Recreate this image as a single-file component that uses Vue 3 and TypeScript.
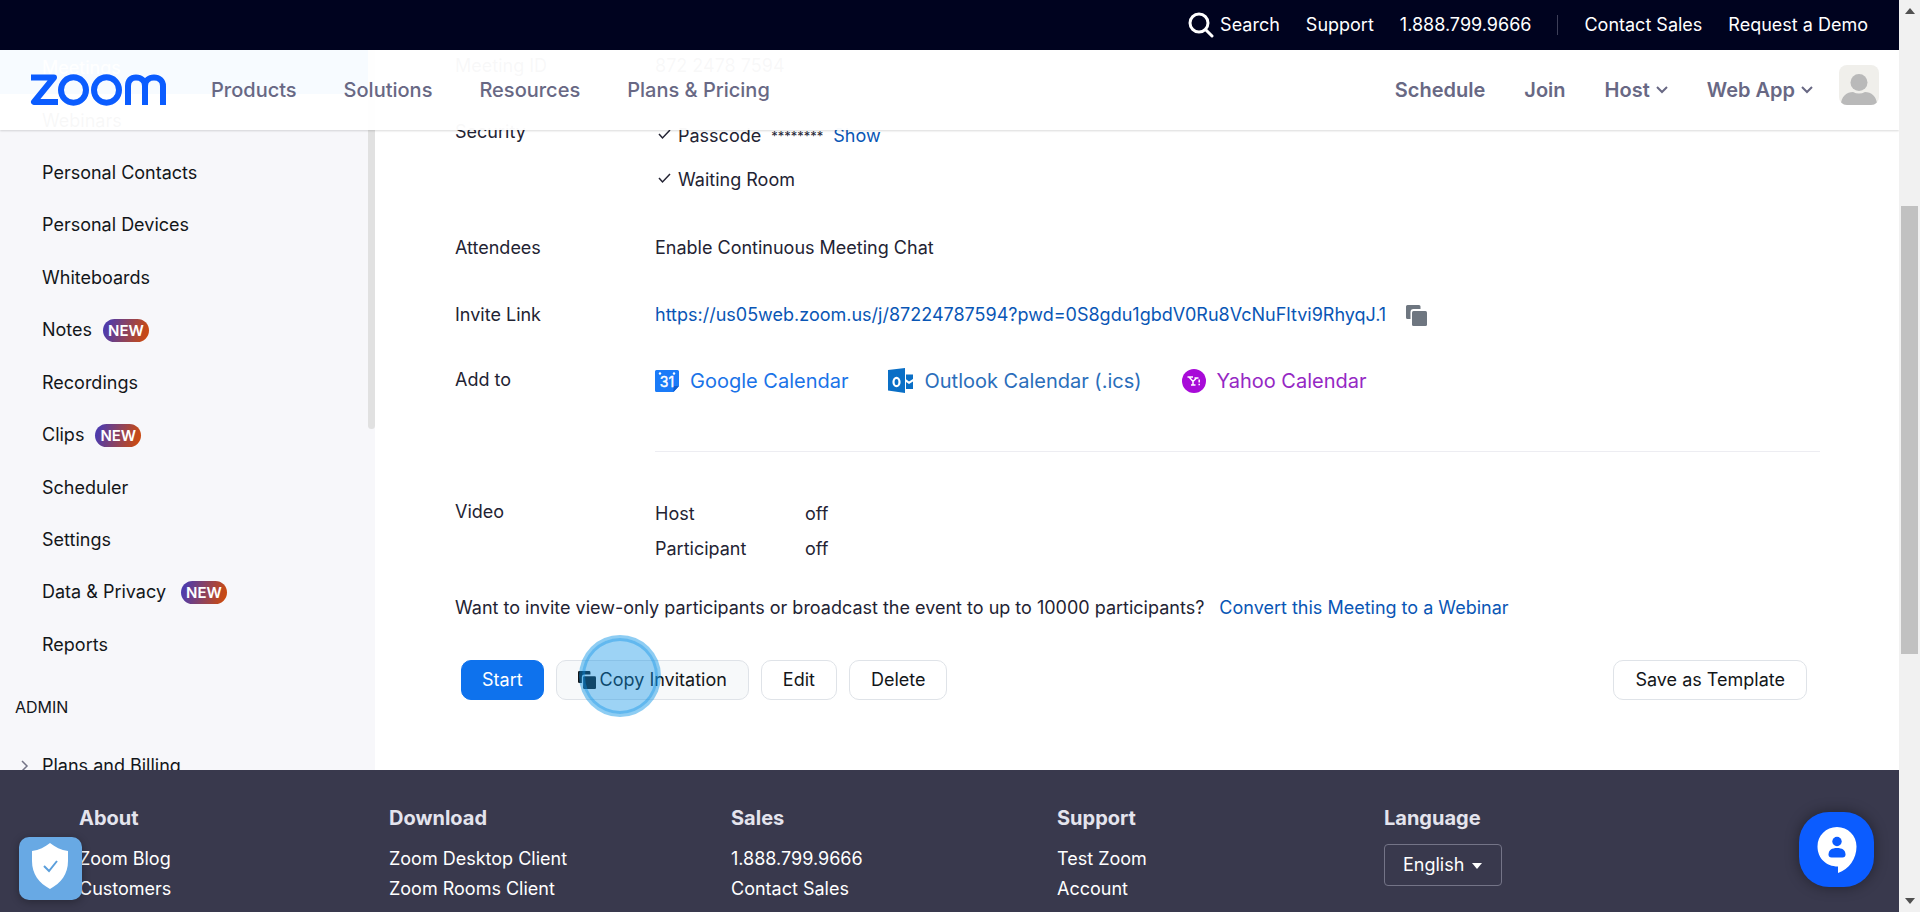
<script setup lang="ts">
import { ref } from 'vue'

interface NavItem {
  label: string
  isNew?: boolean
  wide?: boolean
  active?: boolean
}

const utilityLinks: string[] = ['Support', '1.888.799.9666']
const salesLinks: string[] = ['Contact Sales', 'Request a Demo']
const siteLinks: string[] = ['Products', 'Solutions', 'Resources', 'Plans & Pricing']

const sideItems: NavItem[] = [
  { label: 'Meetings', active: true },
  { label: 'Webinars' },
  { label: 'Personal Contacts' },
  { label: 'Personal Devices' },
  { label: 'Whiteboards' },
  { label: 'Notes', isNew: true },
  { label: 'Recordings' },
  { label: 'Clips', isNew: true },
  { label: 'Scheduler' },
  { label: 'Settings' },
  { label: 'Data & Privacy', isNew: true, wide: true },
  { label: 'Reports' },
]

const video = [
  { who: 'Host', state: 'off' },
  { who: 'Participant', state: 'off' },
]

const footerColumns = [
  { title: 'About', links: ['Zoom Blog', 'Customers'] },
  { title: 'Download', links: ['Zoom Desktop Client', 'Zoom Rooms Client'] },
  { title: 'Sales', links: ['1.888.799.9666', 'Contact Sales'] },
  { title: 'Support', links: ['Test Zoom', 'Account'] },
]

const language = ref('English')
</script>

<template>
  <div class="window">
    <div class="page">
      <div class="topbar">
        <button class="search" type="button">
          <svg width="26" height="26" viewBox="0 0 26 26" fill="none" stroke="#fff" stroke-width="3" stroke-linecap="round">
            <circle cx="11" cy="11" r="9" />
            <path d="M18 18l6 6" />
          </svg>
          Search
        </button>
        <a v-for="l in utilityLinks" :key="l" href="#">{{ l }}</a>
        <span class="divider"></span>
        <a v-for="l in salesLinks" :key="l" href="#">{{ l }}</a>
      </div>

      <div class="body">
        <header class="header">
          <a href="#" class="logo" aria-label="Zoom">
            <svg width="136" height="32" viewBox="0 0 136 32" fill="none" stroke="#0b5cff" stroke-width="6">
              <path d="M1 3.500H24L4 28H28" stroke-linejoin="round" />
              <ellipse cx="43.500" cy="16" rx="12.500" ry="12.700" />
              <ellipse cx="76.500" cy="16" rx="12.500" ry="12.700" />
              <path d="M98 31V12C98 6.500 101 3.500 106 3.500C111 3.500 115 6.500 115 12V31M115 12C115 6.500 119 3.500 124 3.500C129 3.500 133 6.500 133 12V31" />
            </svg>
          </a>
          <nav class="site-nav">
            <a v-for="l in siteLinks" :key="l" href="#">{{ l }}</a>
          </nav>
          <nav class="user-nav">
            <a href="#">Schedule</a>
            <a href="#">Join</a>
            <a href="#">Host
              <svg width="12" height="8" viewBox="0 0 12 8" fill="none" stroke="#686884" stroke-width="2"><path d="M1 1l5 5 5-5" /></svg>
            </a>
            <a href="#">Web App
              <svg width="12" height="8" viewBox="0 0 12 8" fill="none" stroke="#686884" stroke-width="2"><path d="M1 1l5 5 5-5" /></svg>
            </a>
          </nav>
          <button class="avatar" type="button" aria-label="Profile">
            <svg width="40" height="40" viewBox="0 0 40 40" fill="#b9b9b9">
              <circle cx="20" cy="17.500" r="8.500" />
              <path d="M2 40C2 31 8 27 14 27C18 29 22 29 26 27C32 27 38 31 38 40z" />
            </svg>
          </button>
        </header>

        <aside class="sidebar">
          <ul class="side-list">
            <li v-for="item in sideItems" :key="item.label" :class="{ active: item.active }">
              <a href="#">{{ item.label }}</a>
              <span v-if="item.isNew" class="pill" :class="{ wide: item.wide }">NEW</span>
            </li>
          </ul>
          <h2 class="side-heading">ADMIN</h2>
          <a href="#" class="side-group">
            <svg width="8" height="12" viewBox="0 0 8 12" fill="none" stroke="#747487" stroke-width="1.500"><path d="M1 1l5 5-5 5" /></svg>
            Plans and Billing
          </a>
          <span class="side-thumb"></span>
        </aside>

        <main class="content">
          <dl class="details">
            <div class="row id-row">
              <dt>Meeting ID</dt>
              <dd>872 2478 7594</dd>
            </div>
            <div class="row security">
              <dt>Security</dt>
              <dd>
                <div class="check">
                  <svg width="13" height="11" viewBox="0 0 13 11" fill="none" stroke="#232333" stroke-width="1.500"><path d="M1 5l3.500 4L12 1" /></svg>
                  <span>Passcode</span>
                  <span class="stars">********</span>
                  <a href="#" class="link">Show</a>
                </div>
                <div class="check">
                  <svg width="13" height="11" viewBox="0 0 13 11" fill="none" stroke="#232333" stroke-width="1.500"><path d="M1 5l3.500 4L12 1" /></svg>
                  <span>Waiting Room</span>
                </div>
              </dd>
            </div>
            <div class="row attendees">
              <dt>Attendees</dt>
              <dd>Enable Continuous Meeting Chat</dd>
            </div>
            <div class="row invite">
              <dt>Invite Link</dt>
              <dd>
                <a href="#" class="link">https://us05web.zoom.us/j/87224787594?pwd=0S8gdu1gbdV0Ru8VcNuFltvi9RhyqJ.1</a>
                <button class="copy" type="button" aria-label="Copy link">
                  <svg width="21" height="21" viewBox="0 0 21 21" fill="#6e7680">
                    <path d="M1.500 0H13a1.500 1.500 0 0 1 1.500 1.500V4H7.500A3 3 0 0 0 4.500 7V14H1.500A1.500 1.500 0 0 1 0 12.500V1.500A1.500 1.500 0 0 1 1.500 0z" />
                    <rect x="6" y="6" width="15" height="15" rx="1.500" />
                  </svg>
                </button>
              </dd>
            </div>
            <div class="row add-to">
              <dt>Add to</dt>
              <dd class="calendars">
                <a href="#" class="google">
                  <svg width="24" height="24" viewBox="0 0 24 24">
                    <path d="M1.500 1H22.500a1.500 1.500 0 0 1 1.500 1.500V17l-5.500 6H1.500A1.500 1.500 0 0 1 0 21.500V2.500A1.500 1.500 0 0 1 1.500 1z" fill="#1a7bf8" />
                    <path d="M24 17l-5.500 6v-6z" fill="#0d5cd0" />
                    <circle cx="5" cy="4.500" r="1.200" fill="#fff" /><circle cx="19" cy="4.500" r="1.200" fill="#fff" />
                    <text x="12" y="18" text-anchor="middle" font-size="14" fill="#fff" stroke="#fff" stroke-width="0.400">31</text>
                  </svg>
                  Google Calendar
                </a>
                <a href="#" class="outlook">
                  <svg width="25" height="25" viewBox="0 0 25 25" fill="#0a6fc6">
                    <path d="M0 2L17 0V25L0 22.500z" />
                    <path d="M18 6.500H25V11l-4 2.500-3-2.200zM18 14l3 2 4-2.500V21H18z" />
                    <ellipse cx="8.500" cy="14" rx="3" ry="4.200" fill="none" stroke="#fff" stroke-width="2.200" />
                  </svg>
                  Outlook Calendar (.ics)
                </a>
                <a href="#" class="yahoo">
                  <svg width="24" height="24" viewBox="0 0 24 24">
                    <circle cx="12" cy="12" r="12" fill="#a80bd8" />
                    <path d="M5.500 8H11M7 8l4 4.500L14.500 9M12.500 9h4M11 12v4M9 16h4.500" fill="none" stroke="#fff" stroke-width="1.500" />
                    <path d="M17.200 10.500v3M17.200 14.700v1.500" fill="none" stroke="#fff" stroke-width="1.500" />
                  </svg>
                  Yahoo Calendar
                </a>
              </dd>
            </div>
            <div class="row video">
              <dt>Video</dt>
              <dd>
                <div v-for="v in video" :key="v.who" class="video-line">
                  <span>{{ v.who }}</span><span>{{ v.state }}</span>
                </div>
              </dd>
            </div>
          </dl>

          <p class="convert">
            <span>Want to invite view-only participants or broadcast the event to up to 10000 participants?</span>
            <a href="#" class="link">Convert this Meeting to a Webinar</a>
          </p>

          <div class="actions">
            <button class="btn primary" type="button">Start</button>
            <button class="btn hovered" type="button">
              <svg width="18" height="18" viewBox="0 0 21 21" fill="#131619">
                <path d="M1.500 0H13a1.500 1.500 0 0 1 1.500 1.500V4H7.500A3 3 0 0 0 4.500 7V14H1.500A1.500 1.500 0 0 1 0 12.500V1.500A1.500 1.500 0 0 1 1.500 0z" />
                <rect x="6" y="6" width="15" height="15" rx="1.500" />
              </svg>
              Copy Invitation
              <span class="click-ring"></span>
            </button>
            <button class="btn" type="button">Edit</button>
            <button class="btn" type="button">Delete</button>
            <button class="btn save" type="button">Save as Template</button>
          </div>
        </main>
      </div>

      <footer class="footer">
        <section v-for="col in footerColumns" :key="col.title">
          <h3>{{ col.title }}</h3>
          <a v-for="l in col.links" :key="l" href="#">{{ l }}</a>
        </section>
        <section>
          <h3><label for="language">Language</label></h3>
          <div class="select-wrap">
            <select id="language" v-model="language">
              <option>English</option>
            </select>
            <svg width="10" height="6" viewBox="0 0 10 6" fill="#fff"><path d="M0 0h10L5 6z" /></svg>
          </div>
        </section>

        <button class="privacy" type="button" aria-label="Privacy settings">
          <svg width="38" height="46" viewBox="0 0 38 46">
            <path d="M19 0C24 4 30 7 37 8V18C37 31 30 40 19 46C8 40 1 31 1 18V8C8 7 14 4 19 0z" fill="#fff" />
            <path d="M13 23l5 5 8-10" fill="none" stroke="#5b9fdc" stroke-width="2" />
          </svg>
        </button>
        <button class="chat" type="button" aria-label="Chat">
          <svg width="40" height="46" viewBox="0 0 40 46" fill="#fff">
            <path d="M20 0C31 0 39.500 8.500 39.500 19.500C39.500 32 32 42 21 46V39.500C9 39.500 0.500 31 0.500 19.500C0.500 8.500 9 0 20 0z" />
            <circle cx="20" cy="14.500" r="4.700" fill="#0b5cff" />
            <path d="M11.500 27.500C11.500 23 15 21 20 21C25 21 28.500 23 28.500 27.500C28.500 29.500 27.500 30.500 25.500 30.500H14.500C12.500 30.500 11.500 29.500 11.500 27.500z" fill="#0b5cff" />
          </svg>
        </button>
      </footer>
    </div>

    <div class="scrollbar" aria-hidden="true">
      <svg width="10" height="6" viewBox="0 0 10 6" fill="#505050"><path d="M0 6h10L5 0z" /></svg>
      <div class="track"><span class="thumb"></span></div>
      <svg width="10" height="6" viewBox="0 0 10 6" fill="#505050"><path d="M0 0h10L5 6z" /></svg>
    </div>
  </div>
</template>

<style>
body {
  margin: 0;
}
</style>

<style scoped>
.window {
  display: flex;
  height: 100vh;
  overflow: hidden;
  background: #fff;
  color: #232333;
  font-family: Inter, "Liberation Sans", sans-serif;
  font-size: 18px;
  line-height: 24px;
  white-space: nowrap;
}
a {
  color: inherit;
  text-decoration: none;
}
button,
select {
  font: inherit;
  color: inherit;
  border: 0;
  background: none;
  padding: 0;
  cursor: pointer;
}
svg {
  flex: none;
}
.page {
  flex: 1;
  min-width: 0;
  display: flex;
  flex-direction: column;
}

/* Top bar */
.topbar {
  flex: none;
  display: flex;
  align-items: center;
  justify-content: flex-end;
  gap: 26px;
  height: 50px;
  padding-right: 31px;
  box-sizing: border-box;
  background: #00031f;
  color: #fff;
}
.search {
  display: flex;
  align-items: center;
  gap: 6px;
}
.divider {
  width: 1px;
  height: 20px;
  background: #3d3f58;
}

/* Header over the scrolled page */
.body {
  position: relative;
  flex: 1;
  min-height: 0;
  display: flex;
  overflow: hidden;
}
.header {
  position: absolute;
  z-index: 2;
  inset: 0 0 auto 0;
  display: flex;
  align-items: center;
  height: 80px;
  box-sizing: border-box;
  padding: 0 20px 0 30px;
  background: rgba(255, 255, 255, 0.97);
  box-shadow: 0 1px 2px rgba(0, 0, 0, 0.15);
  color: #686884;
  font-size: 20px;
  font-weight: 500;
}
.logo {
  display: flex;
}
.site-nav {
  display: flex;
  gap: 47px;
  margin-left: 45px;
}
.user-nav {
  display: flex;
  gap: 39px;
  margin-left: auto;
  font-weight: 600;
}
.user-nav a {
  display: flex;
  align-items: center;
  gap: 6px;
}
.avatar {
  display: flex;
  margin: 0 0 10px 26px;
  border-radius: 8px;
  background: #f0efeb;
  overflow: hidden;
}

/* Sidebar */
.sidebar {
  position: relative;
  flex: none;
  width: 375px;
  background: #f7f7fa;
  color: #131619;
  overflow: hidden;
}
.side-list {
  display: grid;
  grid-auto-rows: 1fr;
  height: 629px;
  margin: -8px 7px 0 0;
  padding: 0;
  list-style: none;
}
.side-list li {
  display: flex;
  align-items: center;
  gap: 11px;
  padding-left: 42px;
}
.side-list .active {
  background: #0e72ed;
  color: #fff;
}
.pill {
  padding: 0 5px;
  border-radius: 12px;
  background: linear-gradient(105deg, #4f3bab 10%, #c84a14 90%);
  color: #fff;
  font-size: 15px;
  font-weight: 600;
  line-height: 23px;
}
.pill.wide {
  margin-left: 4px;
}
.side-heading {
  margin: 24px 0 35px 15px;
  font-size: 16px;
  font-weight: 400;
  line-height: 24px;
}
.side-group {
  display: flex;
  align-items: center;
  gap: 13px;
  padding-left: 21px;
}
.side-thumb {
  position: absolute;
  top: 0;
  right: 0;
  width: 7px;
  height: 379px;
  border-radius: 0 0 4px 4px;
  background: #e1e1e1;
}

/* Meeting details */
.content {
  flex: 1;
  min-width: 0;
  padding: 4px 79px 0 80px;
}
.link {
  color: #0956b5;
}
.details,
.details dd {
  margin: 0;
}
.row {
  display: grid;
  grid-template-columns: 200px 1fr;
}
.security {
  margin-top: 42px;
}
.security dd {
  display: flex;
  flex-direction: column;
  gap: 20px;
  padding-top: 4px;
}
.check {
  display: flex;
  align-items: center;
  padding-left: 3px;
}
.check svg {
  margin: 0 7px 4px 0;
}
.stars {
  margin: 0 10px;
  font-size: 13px;
}
.attendees {
  margin-top: 44px;
}
.invite {
  margin-top: 43px;
}
.invite dd {
  display: flex;
  align-items: center;
  gap: 20px;
}
.copy {
  display: flex;
}
.add-to {
  margin-top: 41px;
}
.calendars {
  display: flex;
  gap: 40px;
  font-size: 20px;
}
.calendars a {
  display: flex;
  align-items: center;
  gap: 11px;
}
.google {
  color: #1a73e8;
}
.outlook {
  color: #2a6ebb;
}
.yahoo {
  color: #9528c4;
}
.video {
  margin-top: 58px;
}
.video dt,
.video dd {
  padding-top: 48px;
}
.video dd {
  display: flex;
  flex-direction: column;
  gap: 11px;
  padding-top: 50px;
  border-top: 1px solid #ededf2;
}
.video dt {
  border-top: 1px solid transparent;
}
.video-line {
  display: grid;
  grid-template-columns: 150px 1fr;
}
.convert {
  display: flex;
  gap: 15px;
  margin: 35px 0 40px;
}
.actions {
  display: flex;
  gap: 12px;
  padding: 0 13px 0 6px;
  color: #131619;
}
.btn {
  position: relative;
  display: flex;
  align-items: center;
  justify-content: center;
  gap: 4px;
  height: 40px;
  box-sizing: border-box;
  padding: 0 21px;
  border: 1px solid #dfe3e8;
  border-radius: 10px;
  background: #fff;
}
.btn.primary {
  padding: 0 20px;
  border-color: #0e72ed;
  background: #0e72ed;
  color: #fff;
}
.btn.hovered {
  background: #f7f9fa;
}
.save {
  margin-left: auto;
}
.click-ring {
  position: absolute;
  top: -26px;
  left: 22px;
  width: 82px;
  height: 82px;
  box-sizing: border-box;
  border: 3px solid rgba(10, 145, 230, 0.1);
  border-radius: 50%;
  background: rgba(10, 145, 230, 0.4);
  box-shadow: inset 0 0 0 3px rgba(10, 145, 230, 0.4);
}

/* Footer */
.footer {
  position: relative;
  flex: none;
  display: grid;
  grid-template-columns: 310fr 342fr 326fr 327fr 515fr;
  height: 142px;
  box-sizing: border-box;
  padding: 36px 0 0 79px;
  background: #39394d;
  color: #fff;
  overflow: hidden;
}
.footer h3 {
  margin: 0 0 14px;
  color: #e4e4ed;
  font-size: 20px;
  font-weight: 700;
  line-height: 24px;
}
.footer section > a {
  display: block;
  line-height: 30px;
}
.select-wrap {
  position: relative;
  display: inline-flex;
}
.select-wrap select {
  appearance: none;
  height: 42px;
  padding: 0 36px 0 18px;
  border: 1px solid #747487;
  border-radius: 4px;
}
.select-wrap svg {
  position: absolute;
  top: 19px;
  right: 20px;
  pointer-events: none;
}
.select-wrap option {
  color: #232333;
}
.privacy,
.chat {
  position: absolute;
  display: flex;
  align-items: center;
  justify-content: center;
}
.privacy {
  left: 19px;
  bottom: 12px;
  width: 63px;
  height: 63px;
  padding: 0 2px 6px 0;
  border-radius: 10px;
  background: #68a9e4;
  box-shadow: 0 2px 8px rgba(0, 0, 0, 0.3);
}
.chat {
  right: 25px;
  bottom: 25px;
  width: 75px;
  height: 75px;
  border-radius: 30px;
  background: #0b5cff;
  box-shadow: 0 0 14px rgba(0, 0, 0, 0.4);
}

/* Window scrollbar */
.scrollbar {
  flex: none;
  display: flex;
  flex-direction: column;
  align-items: center;
  gap: 6px;
  width: 21px;
  box-sizing: border-box;
  padding: 8px 0;
  background: #f1f1f1;
}
.track {
  flex: 1;
  align-self: stretch;
  padding: 186px 2px 0;
}
.thumb {
  display: block;
  height: 448px;
  background: #c1c1c1;
}
</style>
